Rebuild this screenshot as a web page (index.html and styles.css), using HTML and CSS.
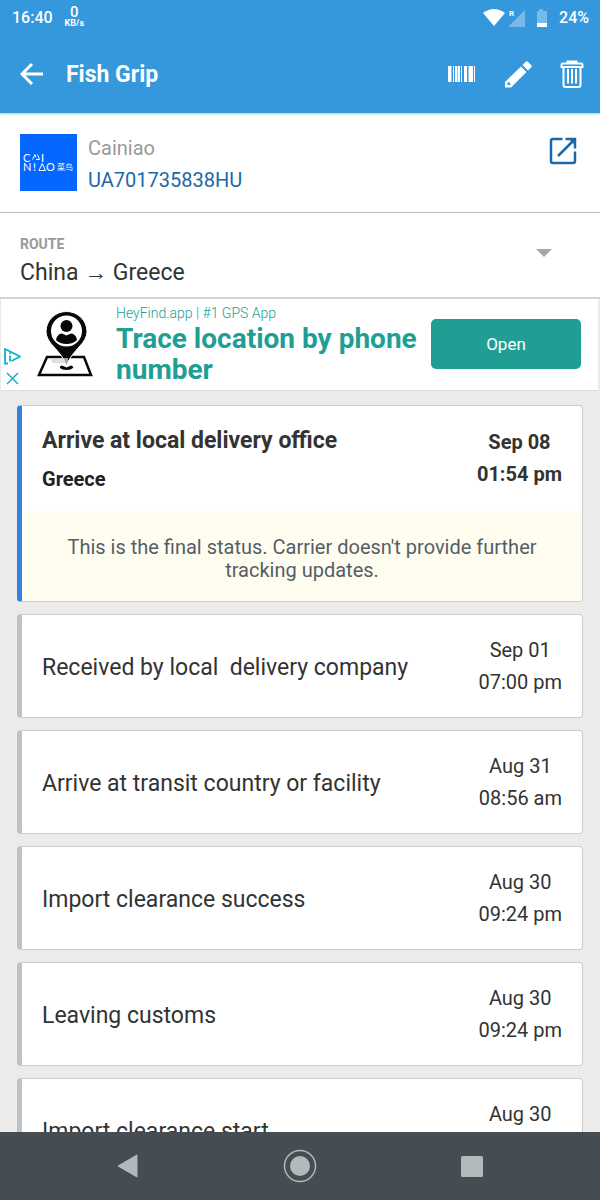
FILE: index.html
```html
<!DOCTYPE html>
<html lang="en">
<head>
<meta charset="utf-8">
<meta name="viewport" content="width=device-width, initial-scale=1">
<title>Fish Grip</title>
<link rel="stylesheet" href="styles.css">
</head>
<body class="screen">
<header class="top">
  <div class="status">
    <span class="clock">16:40</span>
    <span class="speed"><span class="speed-value">0</span><span class="speed-unit">KB/s</span></span>
    <svg class="signals" width="68" height="22" viewBox="0 0 68 22" aria-hidden="true">
      <path d="M0 7Q11-1 22 7L11 20Z" fill="#fff"/>
      <path d="M42 4V21H25Z" fill="#78b9e9"/>
      <text class="roaming" x="26" y="10">R</text>
      <path d="M56 3h4v2h4v12H54V5h2Z" fill="#78b9e9"/>
      <path d="M54 17h10v4H54Z" fill="#fff"/>
    </svg>
    <span class="battery">24%</span>
  </div>
  <div class="appbar">
    <button class="icon" aria-label="Back"><svg width="24" height="24" viewBox="0 0 24 24"><path d="M23 12H2M12 2 2 12l10 10" fill="none" stroke="#fff" stroke-width="3"/></svg></button>
    <h1 class="title">Fish Grip</h1>
    <div class="actions">
      <button class="icon" aria-label="Barcode"><svg width="28" height="18" viewBox="0 0 28 18"><path d="M0 1h3v16H0zM5 1h1v16H5zM7 1h5v16H7zM13 1h1v16h-1zM16 1h3v16h-3zM21 1h4v16h-4zM26 1h1v16h-1z" fill="#fff"/><path d="M3 1h1v16H3zM9 1h1v16H9zM20 1h1v16h-1z" fill="#9bcbef"/></svg></button>
      <button class="icon" aria-label="Edit"><svg width="28" height="28" viewBox="0 0 28 28"><path d="M17 6.500 22.500 12 7 27.500H1v-5.500Z" fill="#fff"/><path d="M18.500 5l3-3q1.300-1.300 2.600 0l3 3q1.300 1.300 0 2.600L24 10.500Z" fill="#fff"/><path d="M3.500 22v3h3.500l-1-1v-1.500H4.500Z" fill="#3598dc"/></svg></button>
      <button class="icon" aria-label="Delete"><svg width="24" height="28" viewBox="0 0 24 28"><g fill="none" stroke="#fff" stroke-width="2"><path d="M7.500 3V1.500h9V3M1.500 7V5q0-1.500 1.500-1.500h18Q22.500 3.500 22.500 5v2Z"/><path d="M3.500 7v18q0 2 2 2h13q2 0 2-2V7M8 9v14.500M12 9v14.500M16 9v14.500"/></g><path d="M7 1h10v2H7Z" fill="#fff"/></svg></button>
    </div>
  </div>
</header>
<main class="content">
  <section class="carrier">
    <svg class="logo" width="57" height="57" viewBox="0 0 57 57" role="img" aria-label="Cainiao logo">
      <path d="M0 0h57v57H0Z" fill="#0567ff"/>
      <text class="logo-latin" x="3" y="28">C</text>
      <text class="logo-latin" x="21" y="28">I</text>
      <text class="logo-latin" x="3" y="37">N</text>
      <text class="logo-latin" x="13" y="37">!</text>
      <text class="logo-latin" x="26" y="37">O</text>
      <path d="M12.500 25.500 15 20.500l1 3M17.500 20.500l2 5h-3.500M19 36.500h6.500L22.200 29.500Z" fill="none" stroke="#fff"/>
      <text class="logo-han" x="37" y="36">菜鸟</text>
    </svg>
    <div class="carrier-text">
      <span class="carrier-name">Cainiao</span>
      <a class="tracking" href="#">UA701735838HU</a>
    </div>
    <a class="open-link" href="#" aria-label="Open carrier site"><svg width="28" height="28" viewBox="0 0 28 28" fill="none" stroke="#1b68a8" stroke-width="2.500"><path d="M13.500 2H4Q2 2 2 4v20q0 2 2 2h20q2 0 2-2v-9.500"/><path d="M16.500 2H26v9.500M26 2 9 19"/><path d="M20 2h6v6Z" fill="#1b68a8" stroke="none"/></svg></a>
  </section>
  <section class="route">
    <div class="route-field">
      <label class="route-label" for="route">ROUTE</label>
      <select class="route-select" id="route"><option>China → Greece</option></select>
    </div>
    <svg class="route-arrow" width="16" height="8" viewBox="0 0 16 8" aria-hidden="true"><path d="M0 0h16L8 8Z" fill="#a6a6a6"/></svg>
  </section>
  <aside class="ad">
    <div class="ad-badges">
      <svg width="17" height="17" viewBox="0 0 17 17" fill="none" stroke="#12b0cc" stroke-width="1.800" aria-hidden="true"><path d="M4 15.500H1V1l15 7.500-8.500 4.500"/><path d="M6 4.500v1.500M6 7.500v6"/></svg>
      <button class="icon" aria-label="Close ad"><svg width="13" height="13" viewBox="0 0 13 13"><path d="M1 1l11 11M12 1 1 12" stroke="#12b0cc" stroke-width="1.500"/></svg></button>
    </div>
    <svg class="ad-picture" width="56" height="66" viewBox="0 0 56 66" aria-hidden="true">
      <path d="M10 46h37l7 18H2Z" fill="#fff" stroke="#080808" stroke-width="2.500"/>
      <path d="M29.500 54Q27 47 17 36 9 28 9 20.500a20.500 20 0 0 1 41 0Q50 28 42 36q-10 11-12.500 18Z" fill="#080808" stroke="#fff" stroke-width="1"/>
      <circle cx="29.500" cy="20" r="15.500" fill="#fff"/>
      <circle cx="29.500" cy="15" r="6" fill="#080808"/>
      <path d="M19 29q1-6 6-6.500l4.500 2 4.500-2q5 .5 6 6.500-4 4-10.500 4T19 29Z" fill="#080808"/>
      <path d="M25 54.500q-3 1-2 2.500 2 2 6.500 2t6.500-2q1-1.500-2-2.500l-4.500 2Z" fill="#080808"/>
      <path d="M12 47h19v5H16Z" fill="#d6d6d6" opacity=".75"/>
    </svg>
    <div class="ad-text">
      <span class="ad-source">HeyFind.app | #1 GPS App</span>
      <strong class="ad-title">Trace location by phone number</strong>
    </div>
    <button class="ad-button">Open</button>
  </aside>
  <ol class="events">
    <li class="event event-latest">
      <div class="event-row"><div><h2 class="event-name">Arrive at local delivery office</h2><p class="event-place">Greece</p></div><time class="event-time">Sep 08<br>01:54 pm</time></div>
      <p class="notice">This is the final status. Carrier doesn't provide further tracking updates.</p>
    </li>
    <li class="event"><div class="event-row"><h2 class="event-name">Received by local&nbsp; delivery company</h2><time class="event-time">Sep 01<br>07:00 pm</time></div></li>
    <li class="event"><div class="event-row"><h2 class="event-name">Arrive at transit country or facility</h2><time class="event-time">Aug 31<br>08:56 am</time></div></li>
    <li class="event"><div class="event-row"><h2 class="event-name">Import clearance success</h2><time class="event-time">Aug 30<br>09:24 pm</time></div></li>
    <li class="event"><div class="event-row"><h2 class="event-name">Leaving customs</h2><time class="event-time">Aug 30<br>09:24 pm</time></div></li>
    <li class="event"><div class="event-row"><h2 class="event-name">Import clearance start</h2><time class="event-time">Aug 30<br>09:24 pm</time></div></li>
  </ol>
</main>
<nav class="system-nav">
  <button class="icon" aria-label="Back"><svg width="34" height="34" viewBox="0 0 34 34"><path d="M26 6v22L7 17Z" fill="#b3b9bb" stroke="#b3b9bb" stroke-linejoin="round"/></svg></button>
  <button class="icon" aria-label="Home"><svg width="34" height="34" viewBox="0 0 34 34"><circle cx="17" cy="17" r="15.500" fill="none" stroke="#b3b9bb" stroke-width="1.500"/><circle cx="17" cy="17" r="10" fill="#b3b9bb"/></svg></button>
  <button class="icon" aria-label="Recent apps"><svg width="34" height="34" viewBox="0 0 34 34"><rect x="6" y="7" width="22" height="21" rx="1.500" fill="#b3b9bb"/></svg></button>
</nav>
</body>
</html>
```
FILE: styles.css
```css
* { box-sizing: border-box; }

.screen {
  margin: 0;
  height: 100vh;
  display: flex;
  flex-direction: column;
  background: #ebebeb;
  color: #333;
  font-family: Roboto, "Liberation Sans", sans-serif;
}

.icon { display: flex; padding: 0; border: 0; background: none; cursor: pointer; }

.top { background: #3598dc; color: #fff; box-shadow: 0 1px 2px #a9c6dc; z-index: 1; }
.status { display: flex; align-items: center; height: 34px; padding: 0 11px 0 12px; font-size: 16px; font-weight: 500; }
.speed { display: flex; flex-direction: column; align-items: center; margin-left: 12px; }
.speed-value { font-size: 15px; line-height: 13px; }
.speed-unit { font-size: 9px; line-height: 9px; font-weight: 700; }
.signals { margin-left: auto; }
.roaming { font-size: 8px; font-weight: 700; fill: #fff; }
.battery { margin-left: 8px; }

.appbar { display: flex; align-items: center; height: 79px; padding: 0 16px 0 20px; }
.title { margin: 0 0 0 22px; padding-top: 2px; font-size: 23px; line-height: 28px; font-weight: 700; }
.actions { display: flex; align-items: center; gap: 28px; margin-left: auto; }

.content { flex: 1; min-height: 0; overflow-y: auto; scrollbar-width: none; }

.carrier { display: flex; align-items: flex-start; padding: 21px 23px 18px 20px; background: #fff; border-bottom: 1px solid #bbb; }
.logo { flex: none; }
.logo-latin { font-family: Lato, sans-serif; font-size: 11px; fill: #fff; }
.logo-han { font-family: "Noto Sans CJK SC", sans-serif; font-size: 8px; fill: #fff; }
.carrier-text { display: flex; flex-direction: column; gap: 4px; margin-left: 11px; font-size: 20px; line-height: 28px; }
.carrier-name { color: #999; }
.tracking { color: #1b68a8; text-decoration: none; }
.open-link { display: flex; margin: 3px 0 0 auto; }

.route { display: flex; align-items: flex-start; justify-content: space-between; padding: 21px 48px 7px 20px; background: #fff; border-bottom: 2px solid #d4d4d4; }
.route-field { display: flex; flex: 1; flex-direction: column; gap: 2px; }
.route-label { color: #999; font-size: 14px; line-height: 20px; font-weight: 700; }
.route-select { appearance: none; height: 34px; padding: 0; border: 0; background: none; color: #333; font-family: inherit; font-size: 23px; line-height: 34px; cursor: pointer; }
.route-arrow { margin-top: 15px; }

.ad { display: flex; align-items: center; margin: 0 2px 0 1px; padding: 4px 17px 5px 2px; background: #fff; color: #219e94; border-bottom: 1px solid #ddd; }
.ad-badges { display: flex; flex-direction: column; align-items: center; align-self: flex-end; gap: 7px; width: 18px; }
.ad-picture { flex: none; margin-left: 16px; }
.ad-text { display: flex; flex: 1; flex-direction: column; margin: 0 6px 0 23px; }
.ad-source { font-size: 14px; line-height: 20px; font-weight: 300; }
.ad-title { font-size: 28px; line-height: 31px; }
.ad-button { flex: none; width: 150px; height: 50px; border: 0; border-radius: 5px; background: #219e94; color: #fff; font-family: inherit; font-size: 17px; cursor: pointer; }

.events { display: flex; flex-direction: column; gap: 12px; margin: 0; padding: 14px 17px; list-style: none; }
.event { overflow: hidden; background: #fff; border: 1px solid #ccc; border-left: 5px solid #bcc2c7; border-radius: 4px; }
.event-row { display: flex; align-items: center; justify-content: space-between; padding: 19px 20px; }
.event-name { margin: 0; padding-top: 4px; font-size: 23px; line-height: 30px; font-weight: 400; }
.event-time { flex: none; font-size: 20px; line-height: 32px; text-align: center; }
.event-latest { border-left-color: #3482dc; }
.event-latest .event-row { align-items: flex-start; padding: 20px 20px 17px; font-weight: 700; }
.event-latest .event-name { padding-top: 0; font-weight: 700; }
.event-place { margin: 8px 0 0; font-size: 20px; line-height: 30px; color: #222; }
.notice { margin: 0; padding: 25px 20px 19px; background: #fffdf0; color: #555e66; font-size: 20px; line-height: 23px; text-align: center; }

.system-nav { display: flex; flex: none; align-items: center; justify-content: space-between; height: 68px; padding: 0 111px; background: #454d52; }
```
